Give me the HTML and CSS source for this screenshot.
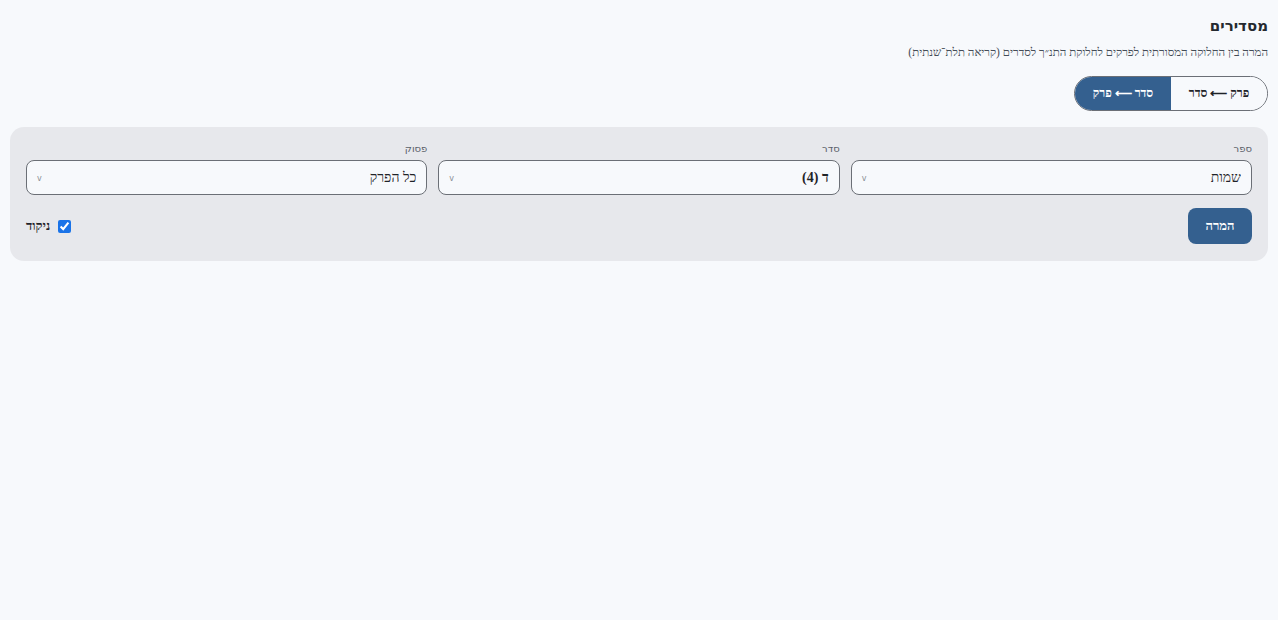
FILE: index.html
```html
<!DOCTYPE html>
<html lang="he" dir="rtl">
<head>
  <meta charset="UTF-8">
  <title>מסדירים</title>
  <link rel="stylesheet" href="styles.css">
</head>
<body>
  <div class="page">
    <h1>מסדירים</h1>
    <p class="subtitle">המרה בין החלוקה המסורתית לפרקים לחלוקת התנ״ך לסדרים (קריאה תלת־שנתית)</p>

    <div class="mode-toggle">
      <button data-mode="seder-to-perek">פרק ⟵ סדר</button>
      <button class="selected" data-mode="perek-to-seder">סדר ⟵ פרק</button>
    </div>

    <div class="panel">
      <div class="fields">
        <div class="field">
          <label for="bookSelect">ספר</label>
          <div class="select-wrap">
            <select id="bookSelect">
              <option>בראשית</option>
              <option selected>שמות</option>
              <option>ויקרא</option>
              <option>במדבר</option>
              <option>דברים</option>
            </select>
          </div>
        </div>
        <div class="field">
          <label for="sederSelect">סדר</label>
          <div class="select-wrap">
            <select id="sederSelect" class="bold">
              <option>א (1)</option>
              <option>ב (2)</option>
              <option>ג (3)</option>
              <option selected>ד (4)</option>
            </select>
          </div>
        </div>
        <div class="field">
          <label for="verseSelect">פסוק</label>
          <div class="select-wrap">
            <select id="verseSelect">
              <option selected>כל הפרק</option>
            </select>
          </div>
        </div>
      </div>

      <div class="actions">
        <button id="convertBtn">המרה</button>
        <label class="check">
          <input type="checkbox" id="nikudInput" checked>
          <span>ניקוד</span>
        </label>
      </div>
    </div>
  </div>

  <script>
    // switch conversion direction
    const modeButtons = document.querySelectorAll('.mode-toggle button');
    modeButtons.forEach(button => {
      button.addEventListener('click', () => {
        modeButtons.forEach(btn => btn.classList.remove('selected'));
        button.classList.add('selected');
      });
    });
  </script>
</body>
</html>
```

FILE: styles.css
```css
body {
  margin: 0;
  background-color: #f7f9fc;
  font-family: serif;
  color: #1f2328;
}

.page {
  padding: 17px 10px;
}

h1 {
  font-family: 'DejaVu Sans', sans-serif;
  font-size: 15px;
  font-weight: bold;
  margin: 0 0 11px;
  color: #24292f;
}

.subtitle {
  font-size: 11.5px;
  color: #444c56;
  margin: 0 0 18px;
}

.mode-toggle {
  display: inline-flex;
  border: 1px solid #6b6f76;
  border-radius: 18px;
  overflow: hidden;
  margin-bottom: 16px;
}

.mode-toggle button {
  font-family: serif;
  font-size: 12px;
  font-weight: bold;
  width: 96px;
  height: 33px;
  border: none;
  background-color: #f7f9fc;
  color: #1f2328;
  cursor: pointer;
}

.mode-toggle button.selected {
  background-color: #34608f;
  color: #fff;
}

.panel {
  background-color: #e7e8ec;
  border-radius: 14px;
  padding: 16px 16px 17px;
}

.fields {
  display: grid;
  grid-template-columns: 1fr 1fr 1fr;
  gap: 11px;
}

.field label {
  display: block;
  font-family: 'DejaVu Sans', sans-serif;
  font-size: 10px;
  color: #5a6069;
  margin-bottom: 6px;
}

.select-wrap {
  position: relative;
}

.select-wrap::after {
  content: "v";
  position: absolute;
  left: 11px;
  top: 14px;
  font-family: 'DejaVu Sans', sans-serif;
  font-size: 8px;
  color: #8a8f96;
  pointer-events: none;
}

select {
  appearance: none;
  width: 100%;
  height: 35px;
  border: 1px solid #6b6f76;
  border-radius: 8px;
  background-color: #f7f9fc;
  padding: 0 10px 0 24px;
  font-family: serif;
  font-size: 14px;
  color: #1f2328;
}

select.bold {
  font-weight: bold;
}

.actions {
  display: flex;
  justify-content: space-between;
  align-items: center;
  margin-top: 13px;
}

#convertBtn {
  font-family: serif;
  font-size: 13px;
  font-weight: bold;
  background-color: #34608f;
  color: #fff;
  border: none;
  border-radius: 8px;
  width: 64px;
  height: 36px;
  cursor: pointer;
}

.check {
  display: flex;
  align-items: center;
  gap: 8px;
  font-size: 13px;
  font-weight: bold;
  color: #1f2328;
}

.check input {
  margin: 0;
  width: 13px;
  height: 13px;
  accent-color: #1a73e8;
}
```
